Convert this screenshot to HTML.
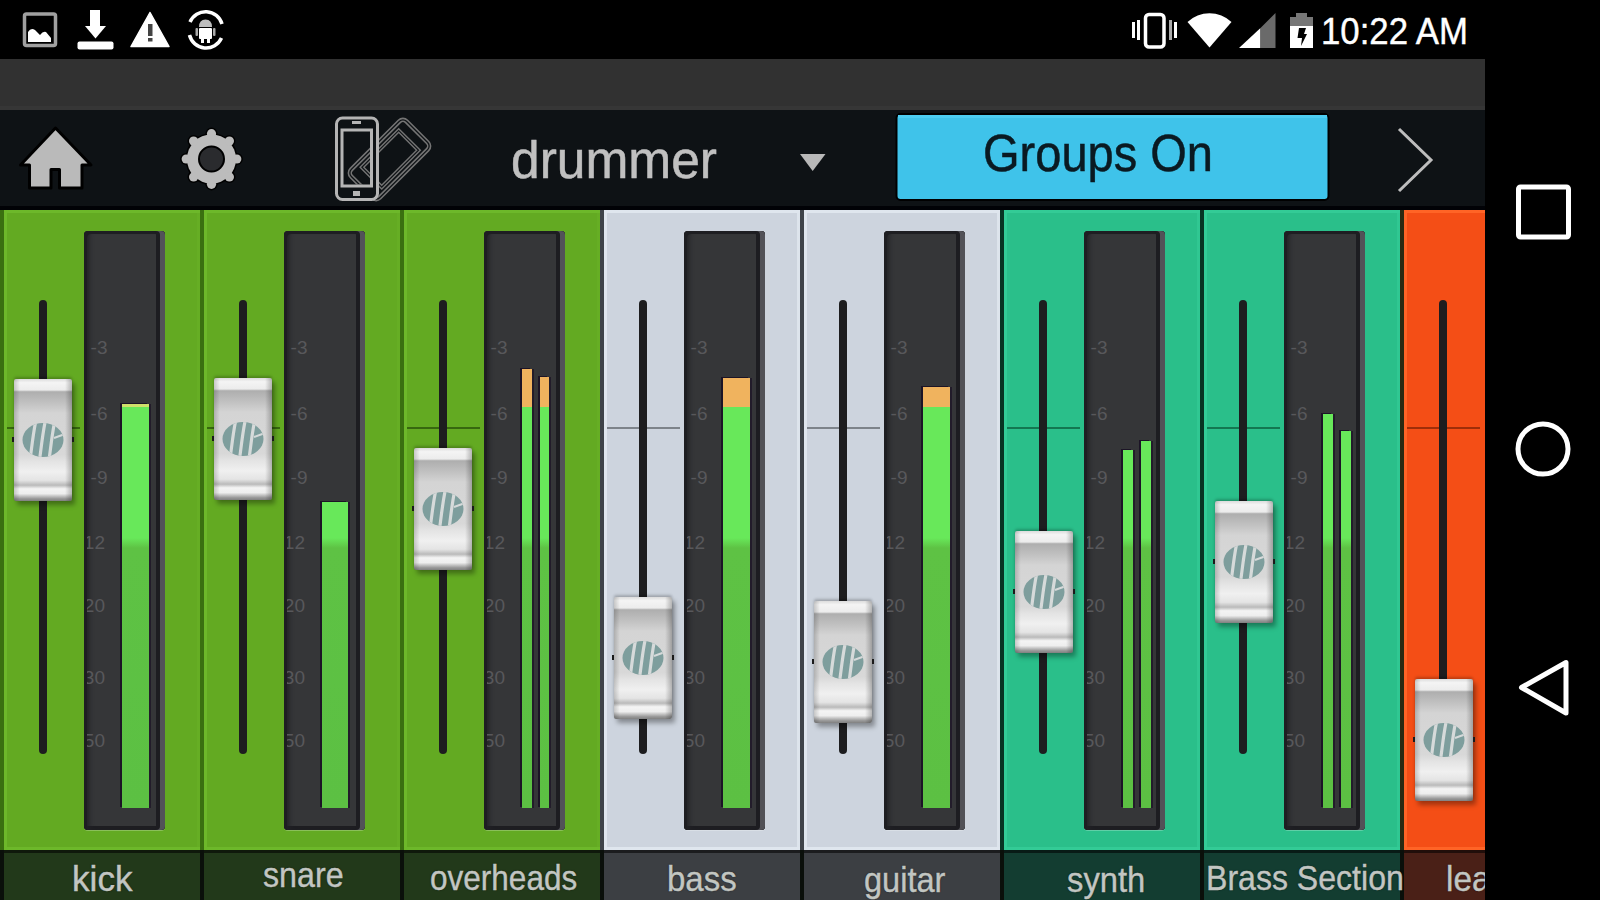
<!DOCTYPE html>
<html><head><meta charset="utf-8">
<style>
html,body{margin:0;padding:0;width:1600px;height:900px;overflow:hidden;background:#000;font-family:"Liberation Sans",sans-serif;}
.a{position:absolute}
#strips{position:absolute;left:0;top:210px;width:1485px;height:690px;overflow:hidden;background:#0b0f0b}
.strip{top:0;height:640px}
.lab{top:640px;height:50px;box-shadow:inset 0 3px 0 rgba(0,0,0,0.55)}
.div{top:0;width:3.5px;height:640px}
.ldiv{top:640px;width:4px;height:50px;background:#0a0f0a}
.zl{top:217px;width:73px;height:2px}
.trk{top:90px;width:8px;height:454px;background:#1d1d1f;border-radius:4px}
.mbox{top:21px;width:81px;height:599px;border-radius:4px;background:#353638;
  box-shadow:inset -5px 0 0 #525258,inset -9px 0 0 #1d1d21,inset 3px 3px 0 #1e1e22,inset 7px 0 5px -2px #222226,inset 0 -4px 0 #1e1e22,0 1px 0 rgba(255,255,255,0.25);overflow:hidden}
.scl{position:absolute;left:3px;top:0;width:70px;height:599px;overflow:hidden}
.scl span{position:absolute;right:49.5px;font-size:19px;line-height:20px;color:#58585b;white-space:nowrap}
.bar{box-shadow:-2px -1px 0 #1c1426,2px 0 0 #221c2a}
.cap{width:58px;height:122px;border-radius:2px;
  background:
   linear-gradient(90deg,rgba(0,0,0,0.18) 0,rgba(0,0,0,0) 10%,rgba(0,0,0,0) 88%,rgba(0,0,0,0.25) 100%),
   linear-gradient(180deg,#dcdcdc 0,#f4f4f4 3%,#ececec 9%,#aeaeae 10.5%,#c2c2c2 20%,#d4d4d4 28%,#d8d8d8 62%,#e4e4e4 68%,#f0f0f0 76%,#e4e4e4 83%,#bababa 87%,#f4f4f4 90%,#eeeeee 94%,#9a9a9a 98%,#808080 100%);
  box-shadow:3px 4px 5px rgba(0,0,0,0.35),0 -2px 3px rgba(0,0,0,0.22)}
.cap .logo{position:absolute;left:7px;top:43px}
.cap i{position:absolute;top:58px;width:2px;height:5px;background:#1a1a1a}
.cap .nl{left:-2px}.cap .nr{right:-2px}
.ltxt{z-index:3;font-size:35px;line-height:35px;transform-origin:0 0;color:#c2c6c2;-webkit-text-stroke:0.4px #c2c6c2;white-space:nowrap;text-shadow:0 0 2px rgba(0,0,0,0.6)}
</style></head><body>
<svg width="0" height="0" style="position:absolute">
 <defs>
  <clipPath id="lc"><ellipse cx="22" cy="18" rx="20.5" ry="17"/></clipPath>
  <symbol id="logo" viewBox="0 0 44 36">
   <g clip-path="url(#lc)">
    <rect x="0" y="0" width="44" height="36" fill="#7e9e9d"/>
    <path d="M9 38 C11 24 12 12 15 -2" stroke="#d6dada" stroke-width="3.2" fill="none"/>
    <path d="M18.5 38 C20.5 24 21.5 12 24.5 -2" stroke="#d6dada" stroke-width="3.2" fill="none"/>
    <path d="M28 38 C30 24 31 12 34 -2" stroke="#d6dada" stroke-width="3.2" fill="none"/>
    <path d="M33 16 L44 12" stroke="#d6dada" stroke-width="2" fill="none"/>
   </g>
  </symbol>
 </defs>
</svg>

<!-- status bar -->
<svg class="a" style="left:0;top:0" width="1600" height="59" viewBox="0 0 1600 59">
 <rect x="24.5" y="14" width="31" height="31.5" fill="none" stroke="#a0a0a0" stroke-width="3.5" rx="2"/>
 <path d="M28 42 L28 32 Q31 27 35 30 L40 35 Q43 31 46 32 L51 38 L51 42 Z" fill="#fff"/>
 <rect x="90" y="10" width="10" height="18" fill="#fff"/>
 <polygon points="85,26 106,26 95.5,38.5" fill="#fff"/>
 <rect x="77.5" y="41.5" width="36" height="8" rx="2" fill="#fff"/>
 <polygon points="131,46.5 169,46.5 150,12.5" fill="#fff" stroke="#fff" stroke-width="1.5" stroke-linejoin="round"/>
 <rect x="148" y="24" width="4.5" height="12" fill="#444"/>
 <rect x="148" y="38" width="4.5" height="3.5" fill="#444"/>
 <path d="M190 22 A17 17 0 0 1 222 24" stroke="#fff" stroke-width="3.5" fill="none"/>
 <path d="M221.5 38 A17 17 0 0 1 189.5 35" stroke="#fff" stroke-width="3.5" fill="none"/>
 <path d="M199 27 Q199 19.5 205.5 19.5 Q212 19.5 212 27 Z" fill="#bdbdbd"/>
 <rect x="199" y="28" width="13" height="11" rx="1" fill="#fff"/>
 <rect x="201" y="38" width="3" height="5" fill="#fff"/><rect x="207" y="38" width="3" height="5" fill="#fff"/>
 <rect x="195.5" y="28" width="2.5" height="8" rx="1" fill="#aaa"/><rect x="213" y="28" width="2.5" height="8" rx="1" fill="#aaa"/>
 <rect x="1145.5" y="14.5" width="18.5" height="32.5" rx="3.5" fill="none" stroke="#fff" stroke-width="3.5"/>
 <rect x="1132" y="22" width="3" height="16" fill="#fff"/><rect x="1137" y="20" width="3" height="20" fill="#fff"/>
 <rect x="1169" y="20" width="3" height="20" fill="#aaa"/><rect x="1174" y="22" width="3" height="16" fill="#fff"/>
 <path d="M1209.5 47.5 L1187.5 22 A32 32 0 0 1 1231.5 22 Z" fill="#fff"/>
 <polygon points="1239,48 1260.5,48 1260.5,28 " fill="#fff"/>
 <polygon points="1260.5,48 1275.5,48 1275.5,13 1260.5,28" fill="#6a6a6a"/>
 <rect x="1296" y="13" width="11" height="5" fill="#777"/>
 <rect x="1290" y="17" width="23" height="9" fill="#777"/>
 <rect x="1290" y="26" width="23" height="22" fill="#fff"/>
 <polygon points="1299,28 1306,28 1304,34 1307,34 1301,46 1302,38 1297.5,38" fill="#000"/>
 <text x="1321" y="44" font-family="Liberation Sans" font-size="37" fill="#fff" stroke="#fff" stroke-width="0.4" textLength="147" lengthAdjust="spacingAndGlyphs">10:22 AM</text>
</svg>

<div class="a" style="left:0;top:59px;width:1485px;height:51px;background:#313131;box-shadow:inset 0 -4px 0 #363636"></div>
<div class="a" style="left:0;top:110px;width:1485px;height:100px;background:#0e1215;box-shadow:inset 0 -4px 0 #010206"></div>

<!-- toolbar -->
<svg class="a" style="left:0;top:110px" width="1485" height="99" viewBox="0 110 1485 99">
 <g stroke="#000" stroke-width="3" stroke-linejoin="round">
  <path d="M55.5 128 L91 165 L82 165 L82 188 L59.5 188 L59.5 169.5 L51 169.5 L51 188 L29.5 188 L29.5 165 L20.5 165 Z" fill="#bababa"/>
 </g>
 <g transform="translate(211.5,159)">
  <g fill="#000" stroke="#000" stroke-width="3"><circle r="24.5"/><circle cx="0.00" cy="-25.30" r="4.6"/><circle cx="17.89" cy="-17.89" r="4.6"/><circle cx="25.30" cy="0.00" r="4.6"/><circle cx="17.89" cy="17.89" r="4.6"/><circle cx="0.00" cy="25.30" r="4.6"/><circle cx="-17.89" cy="17.89" r="4.6"/><circle cx="-25.30" cy="0.00" r="4.6"/><circle cx="-17.89" cy="-17.89" r="4.6"/></g>
  <g fill="#bcbcbc"><circle r="24.5"/><circle cx="0.00" cy="-25.30" r="4.6"/><circle cx="17.89" cy="-17.89" r="4.6"/><circle cx="25.30" cy="0.00" r="4.6"/><circle cx="17.89" cy="17.89" r="4.6"/><circle cx="0.00" cy="25.30" r="4.6"/><circle cx="-17.89" cy="17.89" r="4.6"/><circle cx="-25.30" cy="0.00" r="4.6"/><circle cx="-17.89" cy="-17.89" r="4.6"/></g>
  <circle r="12.5" fill="#2a2b2e" stroke="#000" stroke-width="2"/>
 </g>

 <defs>
  <g id="rph" transform="translate(389.5,159.5) rotate(45)" fill="none">
   <rect x="-20" y="-39" width="40" height="78" rx="5" stroke="#747474" stroke-width="4.5"/>
   <rect x="-20" y="-39" width="40" height="78" rx="5" stroke="#0e1215" stroke-width="1.3"/>
   <rect x="-14" y="-27" width="28" height="52" stroke="#747474" stroke-width="4"/>
   <rect x="-14" y="-27" width="28" height="52" stroke="#0e1215" stroke-width="1.2"/>
  </g>
  <clipPath id="scr"><rect x="343.5" y="131.5" width="26.5" height="53"/></clipPath>
 </defs>
 <use href="#rph"/>
 <rect x="336.5" y="118" width="41" height="81.5" rx="6" fill="#0e1215"/>
 <use href="#rph" clip-path="url(#scr)"/>
 <g fill="none" stroke="#b5b5b5" stroke-width="3">
  <rect x="336.5" y="118" width="41" height="81.5" rx="6"/>
  <rect x="342" y="130" width="29.5" height="56" />
 </g>
 <rect x="352" y="121" width="9" height="3" fill="#b5b5b5"/>
 <rect x="353" y="191" width="7" height="5" fill="#b5b5b5"/>
 <text x="511" y="177.5" font-family="Liberation Sans" font-size="51" fill="#c0c0c0" textLength="206" lengthAdjust="spacingAndGlyphs" stroke="#c0c0c0" stroke-width="0.5">drummer</text>
 <polygon points="800,154 825.5,154 812.7,171" fill="#b8b8b8"/>
 <rect x="896.5" y="114" width="432" height="86" rx="4" fill="#3fc3ea" stroke="#000" stroke-width="2"/>
 <rect x="898" y="115" width="429" height="3" fill="#4ccdf2"/>
 <text x="983" y="170.5" font-family="Liberation Sans" font-size="52" fill="#0a1a22" stroke="#0a1a22" stroke-width="0.5" textLength="230" lengthAdjust="spacingAndGlyphs">Groups On</text>
 <polyline points="1399,129 1431,160 1399,191" fill="none" stroke="#bdbdbd" stroke-width="3"/>
</svg>

<div id="strips">
<div class="a strip" style="left:3.5px;width:196.5px;background:#63aa22;box-shadow:inset 3px 3px 0 #6db82a,inset 0 -3px 0 #6db82a,inset -3px 0 0 #66ae24"></div>
<div class="a lab" style="left:4px;width:196px;background:#22391a"></div>
<div class="a div" style="left:0px;background:#3a7010"></div>
<div class="a ldiv" style="left:0px"></div>
<div class="a zl" style="left:7px;background:rgba(20,50,0,0.55)"></div>
<div class="a trk" style="left:39px"></div>
<div class="a mbox" style="left:84px"><div class="scl"><span style="top:107px">-3</span><span style="top:173px">-6</span><span style="top:237px">-9</span><span style="top:302px;margin-right:2.5px">-12</span><span style="top:365px;margin-right:2.5px">-20</span><span style="top:437px;margin-right:2.5px">-30</span><span style="top:500px;margin-right:2.5px">-50</span></div></div>
<div class="a bar" style="left:122px;top:194px;width:27px;height:404px;background:linear-gradient(180deg,#cfe06a 0px,#cfe06a 3px,#68e85a 3px,#68e85a 134px,#5ec244 144px,#5cc043 100%)"></div>
<div class="a cap" style="left:14px;top:169px"><svg class="logo" width="44" height="36" viewBox="0 0 44 36"><use href="#logo"/></svg><i class="nl"></i><i class="nr"></i></div>
<div class="a ltxt" style="left:71.69px;top:651.40px;transform:scaleX(1.0052)">kick</div>
<div class="a strip" style="left:203.5px;width:196.5px;background:#63aa22;box-shadow:inset 3px 3px 0 #6db82a,inset 0 -3px 0 #6db82a,inset -3px 0 0 #66ae24"></div>
<div class="a lab" style="left:204px;width:196px;background:#22391a"></div>
<div class="a div" style="left:200px;background:#3a7010"></div>
<div class="a ldiv" style="left:200px"></div>
<div class="a zl" style="left:207px;background:rgba(20,50,0,0.55)"></div>
<div class="a trk" style="left:239px"></div>
<div class="a mbox" style="left:284px"><div class="scl"><span style="top:107px">-3</span><span style="top:173px">-6</span><span style="top:237px">-9</span><span style="top:302px;margin-right:2.5px">-12</span><span style="top:365px;margin-right:2.5px">-20</span><span style="top:437px;margin-right:2.5px">-30</span><span style="top:500px;margin-right:2.5px">-50</span></div></div>
<div class="a bar" style="left:322px;top:292px;width:26px;height:306px;background:linear-gradient(180deg,#68e85a 0px,#68e85a 36px,#5ec244 46px,#5cc043 100%)"></div>
<div class="a cap" style="left:214px;top:168px"><svg class="logo" width="44" height="36" viewBox="0 0 44 36"><use href="#logo"/></svg><i class="nl"></i><i class="nr"></i></div>
<div class="a ltxt" style="left:262.78px;top:647.40px;transform:scaleX(0.9212)">snare</div>
<div class="a strip" style="left:403.5px;width:196.5px;background:#63aa22;box-shadow:inset 3px 3px 0 #6db82a,inset 0 -3px 0 #6db82a,inset -3px 0 0 #66ae24"></div>
<div class="a lab" style="left:404px;width:196px;background:#22391a"></div>
<div class="a div" style="left:400px;background:#3a7010"></div>
<div class="a ldiv" style="left:400px"></div>
<div class="a zl" style="left:407px;background:rgba(20,50,0,0.55)"></div>
<div class="a trk" style="left:439px"></div>
<div class="a mbox" style="left:484px"><div class="scl"><span style="top:107px">-3</span><span style="top:173px">-6</span><span style="top:237px">-9</span><span style="top:302px;margin-right:2.5px">-12</span><span style="top:365px;margin-right:2.5px">-20</span><span style="top:437px;margin-right:2.5px">-30</span><span style="top:500px;margin-right:2.5px">-50</span></div></div>
<div class="a bar" style="left:522px;top:159px;width:10px;height:439px;background:linear-gradient(180deg,#f0b35e 0px,#f0b35e 38px,#68e85a 38px,#68e85a 169px,#5ec244 179px,#5cc043 100%)"></div>
<div class="a bar" style="left:540px;top:167px;width:9px;height:431px;background:linear-gradient(180deg,#f0b35e 0px,#f0b35e 30px,#68e85a 30px,#68e85a 161px,#5ec244 171px,#5cc043 100%)"></div>
<div class="a cap" style="left:414px;top:238px"><svg class="logo" width="44" height="36" viewBox="0 0 44 36"><use href="#logo"/></svg><i class="nl"></i><i class="nr"></i></div>
<div class="a ltxt" style="left:430.10px;top:650.40px;transform:scaleX(0.9006)">overheads</div>
<div class="a strip" style="left:603.5px;width:196.5px;background:#cdd4de;box-shadow:inset 3px 3px 0 #dfe6ee,inset 0 -3px 0 #dfe6ee,inset -3px 0 0 #dde4ec"></div>
<div class="a lab" style="left:604px;width:196px;background:#3c3f43"></div>
<div class="a div" style="left:600px;background:#3e4349"></div>
<div class="a ldiv" style="left:600px"></div>
<div class="a zl" style="left:607px;background:rgba(60,64,70,0.55)"></div>
<div class="a trk" style="left:639px"></div>
<div class="a mbox" style="left:684px"><div class="scl"><span style="top:107px">-3</span><span style="top:173px">-6</span><span style="top:237px">-9</span><span style="top:302px;margin-right:2.5px">-12</span><span style="top:365px;margin-right:2.5px">-20</span><span style="top:437px;margin-right:2.5px">-30</span><span style="top:500px;margin-right:2.5px">-50</span></div></div>
<div class="a bar" style="left:723px;top:168px;width:27px;height:430px;background:linear-gradient(180deg,#f0b35e 0px,#f0b35e 29px,#68e85a 29px,#68e85a 160px,#5ec244 170px,#5cc043 100%)"></div>
<div class="a cap" style="left:614px;top:387px"><svg class="logo" width="44" height="36" viewBox="0 0 44 36"><use href="#logo"/></svg><i class="nl"></i><i class="nr"></i></div>
<div class="a ltxt" style="left:667.11px;top:651.40px;transform:scaleX(0.9437)">bass</div>
<div class="a strip" style="left:803.5px;width:196.5px;background:#cdd4de;box-shadow:inset 3px 3px 0 #dfe6ee,inset 0 -3px 0 #dfe6ee,inset -3px 0 0 #dde4ec"></div>
<div class="a lab" style="left:804px;width:196px;background:#3c3f43"></div>
<div class="a div" style="left:800px;background:#3e4349"></div>
<div class="a ldiv" style="left:800px"></div>
<div class="a zl" style="left:807px;background:rgba(60,64,70,0.55)"></div>
<div class="a trk" style="left:839px"></div>
<div class="a mbox" style="left:884px"><div class="scl"><span style="top:107px">-3</span><span style="top:173px">-6</span><span style="top:237px">-9</span><span style="top:302px;margin-right:2.5px">-12</span><span style="top:365px;margin-right:2.5px">-20</span><span style="top:437px;margin-right:2.5px">-30</span><span style="top:500px;margin-right:2.5px">-50</span></div></div>
<div class="a bar" style="left:923px;top:177px;width:27px;height:421px;background:linear-gradient(180deg,#f0b35e 0px,#f0b35e 20px,#68e85a 20px,#68e85a 151px,#5ec244 161px,#5cc043 100%)"></div>
<div class="a cap" style="left:814px;top:391px"><svg class="logo" width="44" height="36" viewBox="0 0 44 36"><use href="#logo"/></svg><i class="nl"></i><i class="nr"></i></div>
<div class="a ltxt" style="left:864.07px;top:652.40px;transform:scaleX(0.9302)">guitar</div>
<div class="a strip" style="left:1003.5px;width:196.5px;background:#2abf8a;box-shadow:inset 3px 3px 0 #33cb96,inset 0 -3px 0 #33cb96,inset -3px 0 0 #30c792"></div>
<div class="a lab" style="left:1004px;width:196px;background:#133d31"></div>
<div class="a div" style="left:1000px;background:#083322"></div>
<div class="a ldiv" style="left:1000px"></div>
<div class="a zl" style="left:1007px;background:rgba(0,60,35,0.55)"></div>
<div class="a trk" style="left:1039px"></div>
<div class="a mbox" style="left:1084px"><div class="scl"><span style="top:107px">-3</span><span style="top:173px">-6</span><span style="top:237px">-9</span><span style="top:302px;margin-right:2.5px">-12</span><span style="top:365px;margin-right:2.5px">-20</span><span style="top:437px;margin-right:2.5px">-30</span><span style="top:500px;margin-right:2.5px">-50</span></div></div>
<div class="a bar" style="left:1123px;top:240px;width:9.5px;height:358px;background:linear-gradient(180deg,#68e85a 0px,#68e85a 88px,#5ec244 98px,#5cc043 100%)"></div>
<div class="a bar" style="left:1141px;top:231px;width:9.5px;height:367px;background:linear-gradient(180deg,#68e85a 0px,#68e85a 97px,#5ec244 107px,#5cc043 100%)"></div>
<div class="a cap" style="left:1015px;top:321px"><svg class="logo" width="44" height="36" viewBox="0 0 44 36"><use href="#logo"/></svg><i class="nl"></i><i class="nr"></i></div>
<div class="a ltxt" style="left:1066.76px;top:651.60px;transform:scaleX(0.9358)">synth</div>
<div class="a strip" style="left:1203.5px;width:196.5px;background:#2abf8a;box-shadow:inset 3px 3px 0 #33cb96,inset 0 -3px 0 #33cb96,inset -3px 0 0 #30c792"></div>
<div class="a lab" style="left:1204px;width:196px;background:#133d31"></div>
<div class="a div" style="left:1200px;background:#083322"></div>
<div class="a ldiv" style="left:1200px"></div>
<div class="a zl" style="left:1207px;background:rgba(0,60,35,0.55)"></div>
<div class="a trk" style="left:1239px"></div>
<div class="a mbox" style="left:1284px"><div class="scl"><span style="top:107px">-3</span><span style="top:173px">-6</span><span style="top:237px">-9</span><span style="top:302px;margin-right:2.5px">-12</span><span style="top:365px;margin-right:2.5px">-20</span><span style="top:437px;margin-right:2.5px">-30</span><span style="top:500px;margin-right:2.5px">-50</span></div></div>
<div class="a bar" style="left:1323px;top:204px;width:9.5px;height:394px;background:linear-gradient(180deg,#68e85a 0px,#68e85a 124px,#5ec244 134px,#5cc043 100%)"></div>
<div class="a bar" style="left:1341px;top:221px;width:9.5px;height:377px;background:linear-gradient(180deg,#68e85a 0px,#68e85a 107px,#5ec244 117px,#5cc043 100%)"></div>
<div class="a cap" style="left:1215px;top:291px"><svg class="logo" width="44" height="36" viewBox="0 0 44 36"><use href="#logo"/></svg><i class="nl"></i><i class="nr"></i></div>
<div class="a ltxt" style="left:1205.95px;top:649.90px;transform:scaleX(0.9161)">Brass Section</div>
<div class="a strip" style="left:1403.5px;width:196.5px;background:#f44e16;box-shadow:inset 3px 3px 0 #ff6426,inset 0 -3px 0 #ff6426,inset -3px 0 0 #ff6426"></div>
<div class="a lab" style="left:1404px;width:196px;background:#4a2017"></div>
<div class="a div" style="left:1400px;background:#2a2a12"></div>
<div class="a ldiv" style="left:1400px"></div>
<div class="a zl" style="left:1407px;background:rgba(90,20,0,0.55)"></div>
<div class="a trk" style="left:1439px"></div>
<div class="a cap" style="left:1415px;top:469px"><svg class="logo" width="44" height="36" viewBox="0 0 44 36"><use href="#logo"/></svg><i class="nl"></i><i class="nr"></i></div>
<div class="a ltxt" style="left:1445.50px;top:651.40px;transform:scaleX(0.9500)">lead</div>
</div>

<!-- nav bar -->
<svg class="a" style="left:1485px;top:0" width="115" height="900" viewBox="1485 0 115 900">
 <rect x="1518.5" y="187" width="50" height="50" rx="2" fill="none" stroke="#fff" stroke-width="5"/>
 <circle cx="1543" cy="449" r="25" fill="none" stroke="#fff" stroke-width="5"/>
 <polygon points="1521.5,687.5 1566,662.5 1566,713" fill="none" stroke="#fff" stroke-width="5" stroke-linejoin="round"/>
</svg>
</body></html>
